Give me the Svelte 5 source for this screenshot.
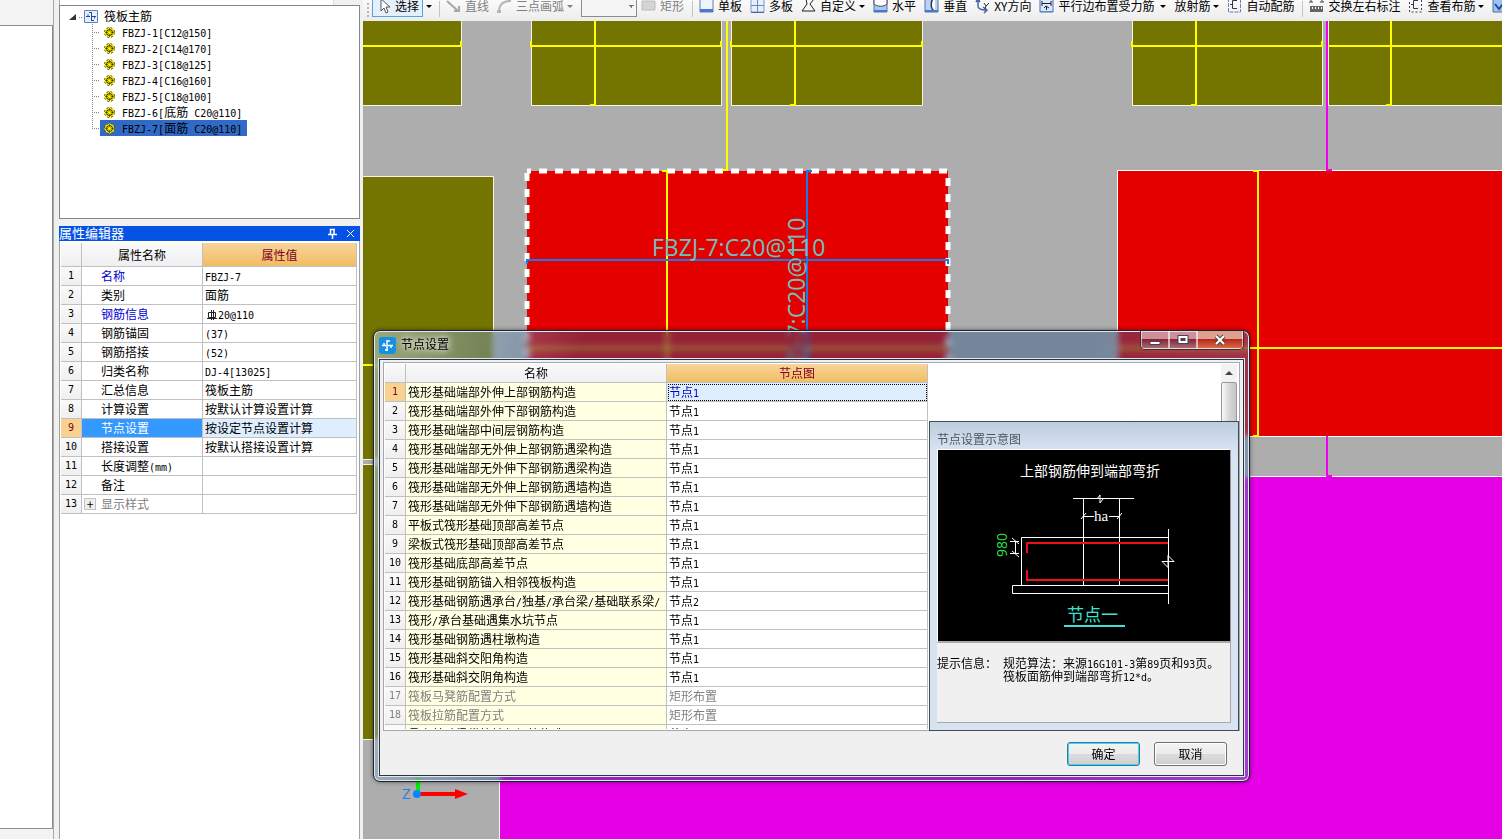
<script>
const tree = [
  'FBZJ-1[C12@150]',
  'FBZJ-2[C14@170]',
  'FBZJ-3[C18@125]',
  'FBZJ-4[C16@160]',
  'FBZJ-5[C18@100]',
  'FBZJ-6[底筋 C20@110]',
  'FBZJ-7[面筋 C20@110]'
]
let picked = $state(6)

const props = [
  { name: '名称', value: 'FBZJ-7', key: true },
  { name: '类别', value: '面筋' },
  { name: '钢筋信息', value: '20@110', key: true, rebar: true },
  { name: '钢筋锚固', value: '(37)' },
  { name: '钢筋搭接', value: '(52)' },
  { name: '归类名称', value: 'DJ-4[13025]' },
  { name: '汇总信息', value: '筏板主筋' },
  { name: '计算设置', value: '按默认计算设置计算' },
  { name: '节点设置', value: '按设定节点设置计算', active: true },
  { name: '搭接设置', value: '按默认搭接设置计算' },
  { name: '长度调整(mm)', value: '' },
  { name: '备注', value: '' },
  { name: '显示样式', value: '', group: true }
]

const nodes = [
  ['筏形基础端部外伸上部钢筋构造', '节点1'],
  ['筏形基础端部外伸下部钢筋构造', '节点1'],
  ['筏形基础端部中间层钢筋构造', '节点1'],
  ['筏形基础端部无外伸上部钢筋遇梁构造', '节点1'],
  ['筏形基础端部无外伸下部钢筋遇梁构造', '节点1'],
  ['筏形基础端部无外伸上部钢筋遇墙构造', '节点1'],
  ['筏形基础端部无外伸下部钢筋遇墙构造', '节点1'],
  ['平板式筏形基础顶部高差节点', '节点1'],
  ['梁板式筏形基础顶部高差节点', '节点1'],
  ['筏形基础底部高差节点', '节点1'],
  ['筏形基础钢筋锚入相邻筏板构造', '节点1'],
  ['筏形基础钢筋遇承台/独基/承台梁/基础联系梁/', '节点2'],
  ['筏形/承台基础遇集水坑节点', '节点1'],
  ['筏形基础钢筋遇柱墩构造', '节点1'],
  ['筏形基础斜交阳角构造', '节点1'],
  ['筏形基础斜交阴角构造', '节点1'],
  ['筏板马凳筋配置方式', '矩形布置'],
  ['筏板拉筋配置方式', '矩形布置'],
  ['悬空基础梁纵筋端部钢筋构造', '节点1']
]

const tools = [
  { icon: 'cursor', text: '选择', on: true, arrow: true },
  { sep: true },
  { icon: 'line', text: '直线', off: true },
  { icon: 'arc', text: '三点画弧', off: true, arrow: true },
  { combo: true },
  { icon: 'rect', text: '矩形', off: true },
  { sep: true },
  { icon: 'single', text: '单板' },
  { icon: 'multi', text: '多板' },
  { icon: 'poly', text: '自定义', arrow: true },
  { icon: 'horiz', text: '水平' },
  { icon: 'vert', text: '垂直' },
  { icon: 'xy', text: 'XY方向' },
  { icon: 'edge', text: '平行边布置受力筋', arrow: true, wide: true },
  { text: '放射筋', arrow: true },
  { icon: 'auto', text: '自动配筋' },
  { sep: true },
  { icon: 'swap', text: '交换左右标注' },
  { icon: 'view', text: '查看布筋', arrow: true },
  { icon: 'check', text: '' }
]
</script>

<!-- ascii runs get the half-width face, everything else the CJK one -->
{#snippet mixed(text)}{#each text.split(/([\x20-\x7e]+)/) as run, i}{#if i % 2}<span class="latin">{run}</span>{:else}{run}{/if}{/each}{/snippet}

{#snippet toolIcon(name)}
  <svg class="ticon" width="15" height="22" viewBox="0 0 15 22" fill="none" aria-hidden="true">
    {#if name === 'cursor'}
      <path d="M4 4v12l3-3 2 5 2-1-2-5h4z" fill="#fff" stroke="#555" />
    {:else if name === 'line'}
      <path d="M1 6l11 10M8 16h5v-5" stroke="#a8a8a8" stroke-width="2" />
    {:else if name === 'arc'}
      <path d="M2 17C2 9 6 6 13 6" stroke="#b8b8b8" stroke-width="2" />
      <path d="M0 15h4v3H0zM11 4h3v3h-3z" fill="#b4b4b4" />
    {:else if name === 'rect'}
      <path d="M1 6h13v9H1z" fill="#d4d4d4" stroke="#bdbdbd" />
    {:else if name === 'single'}
      <path d="M1 3h13v14H1z" fill="#eef5ff" stroke="#667fae" />
      <path d="M1 14h13v3H1z" fill="#4a78cf" />
    {:else if name === 'multi'}
      <path d="M1 3h13v14H1z" fill="#e4efff" stroke="#7f97c4" />
      <path d="M7.500 3v14M1 10.500h13" stroke="#7088b4" />
      <path d="M1 17.500h13" stroke="#4467b0" />
    {:else if name === 'poly'}
      <path d="M5 4h8l-4 5 5 7H1l5-7z" stroke="#222" />
    {:else if name === 'horiz'}
      <path d="M1 4h13v13H1z" fill="#a9c8f3" stroke="#5570a0" />
      <path d="M1 4v5c3 3 10 3 13 0V4" fill="#fff" stroke="#446" />
      <path d="M1 15h13v2H1z" fill="#4778c9" />
    {:else if name === 'vert'}
      <path d="M1 3h13v14H1z" fill="#b9d3f7" stroke="#5570a0" />
      <path d="M11 3C6 4 6 15 11 16" fill="#fff" stroke="#335" stroke-width="1.500" />
      <path d="M1 15h13v2H1z" fill="#4778c9" />
    {:else if name === 'xy'}
      <path d="M3 4v7c0 3 3 4 8 4M3 4L1 7M3 4l2 3M8 12l4 3-3 3" stroke="#4265a8" stroke-width="1.500" />
      <path d="M9 8l2 3 3-3M11 11l-1 3" stroke="#333" />
    {:else if name === 'edge'}
      <path d="M1 3h13v14H1z" fill="#dce9fc" stroke="#4b6ba8" />
      <path d="M3 8.500h9M3 6v5M12 6v5M7.500 15v-4M5 13l2-2 3 2" stroke="#223" />
      <path d="M1 16h13v1H1z" fill="#5b86d6" />
    {:else if name === 'auto'}
      <path d="M1.500 3v14h12V3" stroke="#6d7fc0" stroke-dasharray="4 1" />
      <path d="M10 5.500H5.500v8H10M3 9.500h3" stroke="#335" />
    {:else if name === 'swap'}
      <path d="M2 7V4h4M13 7V4H9M0 7h4M11 7h4" stroke="#444" />
      <path d="M1 11h13v6H1z" fill="#666" />
      <path d="M3 13h10" stroke="#fff" stroke-dasharray="1 2" stroke-width="2" />
    {:else if name === 'view'}
      <path d="M1.500 3v14h12V3" stroke="#444" stroke-dasharray="2 2" />
      <path d="M10 5.500H5.500v8H10M3 9.500h3" stroke="#335" />
    {:else if name === 'check'}
      <path d="M1 3h13v14H1z" fill="#9fc2f2" stroke="#5570a0" />
      <path d="M3 9l4 5 7-9" stroke="#234a8c" stroke-width="2" />
    {/if}
  </svg>
{/snippet}

<div class="app">
  <aside class="strip"><div class="strip-body"></div></aside>

  <aside class="side">
    <div class="stub"></div>
    <section class="tree">
      <div class="root">
        <svg width="44" height="16" viewBox="0 0 44 16" aria-hidden="true">
          <path d="M16 6v6H9z" fill="#333" />
          <path d="M19 9.500h4" stroke="#888" stroke-dasharray="1 1" />
          <path d="M24.500 2.500h13v12h-13z" fill="#e4effc" stroke="#5f7fc4" />
          <path d="M31.500 4v9M26 8.500h4M32 8.500h4M28 6.500v2M34.500 8.500v2M29 4.500h3M31 12.500h3" stroke="#27499a" fill="none" />
        </svg>
        筏板主筋
      </div>
      <ul>
        {#each tree as label, i}
          <li class:last={i === tree.length - 1}>
            <button class:picked={picked === i} onclick={() => picked = i}>
              <svg width="13" height="13" viewBox="0 0 13 13" aria-hidden="true">
                <circle cx="6.500" cy="6.500" r="5" fill="#fff200" stroke="#4a4a10" stroke-dasharray="2 2" />
                <path d="M6.500 2v9M2 6.500h9M4 4l5 5M9 4l-5 5" stroke="#4a4a00" stroke-width="0.700" />
                <circle cx="6.500" cy="6.500" r="3" fill="none" stroke="#333300" />
                <circle cx="6.500" cy="6.500" r="1.500" fill="#fff200" />
              </svg>
              <span>{@render mixed(label)}</span>
            </button>
          </li>
        {/each}
      </ul>
    </section>

    <section class="editor">
      <header>
        <h2>属性编辑器</h2>
        <button aria-label="固定">
          <svg width="9" height="11" viewBox="0 0 9 11"><path d="M2.500 1v5M2 1.500h5M6 1v5M0 6.500h9M4.500 7v4" stroke="#fff" fill="none" stroke-width="1.500" /></svg>
        </button>
        <button aria-label="关闭">
          <svg width="9" height="9" viewBox="0 0 9 9"><path d="M1 1l7 7M8 1L1 8" stroke="#fff" /></svg>
        </button>
      </header>
      <div class="editor-body">
        <table class="grid props">
          <colgroup><col class="c-num"><col class="c-name"><col></colgroup>
          <thead>
            <tr><th></th><th>属性名称</th><th class="hot">属性值</th></tr>
          </thead>
          <tbody>
            {#each props as row, i}
              <tr class:active={row.active}>
                <th class="num">{i + 1}</th>
                <td class="name" class:key={row.key} class:dim={row.group}>
                  {#if row.group}<button class="plus" aria-label="展开">+</button>{/if}{@render mixed(row.name)}
                </td>
                <td>
                  {#if row.rebar}<svg class="rebar" width="10" height="10" viewBox="0 0 10 10" aria-hidden="true"><path d="M1.500 2.500h7v5h-7zM4.500 0v10M6.500 0v10M0 8.500h10" stroke="#222" fill="none" /></svg>{/if}{@render mixed(row.value)}
                </td>
              </tr>
            {/each}
          </tbody>
        </table>
      </div>
    </section>
  </aside>

  <main>
    <nav class="toolbar">
      <i class="grip"></i>
      {#each tools as t}
        {#if t.sep}
          <i class="sep"></i>
        {:else if t.combo}
          <select aria-label="画弧方式"><option></option></select>
        {:else}
          <button class="tool" class:on={t.on} class:wide={t.wide} disabled={t.off} aria-label={t.text || '校核'}>
            <span class="face">
              {#if t.icon}{@render toolIcon(t.icon)}{/if}
              {#if t.text}<span>{t.text}</span>{/if}
            </span>
            {#if t.arrow}<i class="drop"></i>{/if}
          </button>
        {/if}
      {/each}
    </nav>

    <div class="canvas">
      <svg class="plan" viewBox="363 21 1139 818" preserveAspectRatio="xMinYMin slice" fill="none">
        <g fill="#747400" stroke="#f4f4e8">
          <path d="M362.500 20v85.500h99V20zM531.500 20v85.500h190V20zM731.500 20v85.500h191V20zM1132.500 20v85.500h190V20zM1328.500 20v85.500h180V20z" />
          <path d="M362.500 176.500h131v283h-131zM362.500 464.500h131v275h-131z" />
        </g>
        <path d="M499.500 840V476.500H1510V840z" fill="#e600e6" stroke="#fff" />
        <path d="M1117.500 170.500H1510v266h-392.500z" fill="#e50000" stroke="#fff" />
        <path d="M527 171h421v270H527z" fill="#e50000" />
        <path d="M527 171h421v270H527z" stroke="#fff" stroke-width="5" stroke-dasharray="8 8" stroke-dashoffset="4" />
        <g stroke="#ffff00" stroke-width="2">
          <path d="M363 46h98v-5M531 41v5h190v-5M731 41v5h191v-5M1132 41v5h190v-5M1328 46h180" />
          <path d="M595 20v85h-5M795 20v85h-5M1196 20v85h-5M1391 20v85h-5M727 20v150h-5M363 365h130" />
          <path d="M662 171h5v270M527 348h421M1253 171h5v265h-5M1118 348h384" />
        </g>
        <path d="M527 264v-4h421v4M812 171h-5v270" stroke="#1f78e8" stroke-width="2" />
        <path d="M1327 20v150h5M1327 436v40h5" stroke="#f000f0" stroke-width="2" />
        <g fill="#6cc0bd" font-size="23" class="tag">
          <text x="652" y="256">FBZJ-7:C20@110</text>
          <text transform="translate(805 391) rotate(-90)">FBZJ-7:C20@110</text>
        </g>
        <path d="M418 775v18" stroke="#00f000" stroke-width="4" />
        <path d="M420 794h38" stroke="#f00" stroke-width="4" />
        <path d="M455 789l13 5-13 5z" fill="#f00" />
        <circle cx="417" cy="794" r="4" fill="#0a84ff" />
        <text x="402" y="799" font-size="15" fill="#2a7fe0" class="tag">Z</text>
      </svg>

      <div class="dialog" role="dialog" aria-labelledby="dlg-title">
        <header class="caption">
          <svg width="17" height="17" viewBox="0 0 17 17" aria-hidden="true">
            <rect width="17" height="17" rx="3" fill="#1590e8" />
            <path d="M8 3v11M3 8.500h4M9 8.500h5M5 6v3M12 8v3M8 4h3M6 13h3" stroke="#fff" stroke-width="1.500" fill="none" />
          </svg>
          <h1 id="dlg-title">节点设置</h1>
          <div class="winbtns">
            <button aria-label="最小化"><svg width="12" height="12" viewBox="0 0 12 12"><path d="M1 7.500h10v3H1z" fill="#fff" stroke="#445" /></svg></button>
            <button aria-label="最大化"><svg width="12" height="12" viewBox="0 0 12 12"><path d="M2.500 3h7v5h-7z" fill="none" stroke="#445" stroke-width="4" /><path d="M2.500 3h7v5h-7z" fill="none" stroke="#fff" stroke-width="2" /></svg></button>
            <button aria-label="关闭" class="x"><svg width="12" height="12" viewBox="0 0 12 12"><path d="M2 2l8 8M10 2l-8 8" stroke="#544" stroke-width="4" /><path d="M2 2l8 8M10 2l-8 8" stroke="#fff" stroke-width="2" /></svg></button>
          </div>
        </header>

        <div class="client">
          <div class="list">
            <div class="rows">
              <table class="grid nodes">
                <colgroup><col class="c-num"><col class="c-half"><col class="c-half"></colgroup>
                <thead>
                  <tr><th></th><th>名称</th><th class="hot">节点图</th></tr>
                </thead>
                <tbody>
                  {#each nodes as [name, pic], i}
                    <tr class:first={i === 0} class:dim={i === 16 || i === 17}>
                      <th class="num">{i < 18 ? i + 1 : ''}</th>
                      <td class="cream">{@render mixed(name)}</td>
                      <td>{@render mixed(pic)}</td>
                    </tr>
                  {/each}
                </tbody>
              </table>
            </div>
            <div class="scroll"><i></i><b></b></div>

            <section class="preview">
              <h3>节点设置示意图</h3>
              <svg class="sketch" viewBox="0 0 292 191" fill="none" stroke="#fff">
                <rect width="292" height="191" fill="#000" stroke="none" />
                <g stroke="none" fill="#fff">
                  <text x="152" y="26" font-size="14" text-anchor="middle">上部钢筋伸到端部弯折</text>
                  <text x="156" y="71" font-size="15" class="serif">ha</text>
                </g>
                <path d="M135 48.500h61M145.500 48v87M181.500 48v87M159 49l3-4v8l3-4" />
                <path d="M143 69l5-6M145 66.500h11M171 66.500h11M179 69l5-6" />
                <path d="M230 87.500H83.500v48M230 135.500H74.500v8H230M230.500 79v75" />
                <path d="M224 111.500h12l-6-6v12z" />
                <path d="M77.500 91v13M72 91.500h9M72 103.500h9M74 88l7 6M74 101l7 6" />
                <path d="M230 93H89v10M230 130H89v-10" stroke="#f01010" stroke-width="2" />
                <text transform="translate(69 107) rotate(-90)" font-size="14" fill="#2fe04a" stroke="none" class="tag">980</text>
                <text x="129" y="171" font-size="17" fill="#40e0d0" stroke="none">节点一</text>
                <path d="M126 176h61" stroke="#40e0d0" stroke-width="2" />
              </svg>
              <dl>
                <dt>提示信息：</dt>
                <dd>规范算法：来源{@render mixed('16G101-3')}第{@render mixed('89')}页和{@render mixed('93')}页。<br>筏板面筋伸到端部弯折{@render mixed('12*d')}。</dd>
              </dl>
            </section>
          </div>

          <footer>
            <button class="ok">确定</button>
            <button>取消</button>
          </footer>
        </div>
      </div>
    </div>
  </main>
</div>

<style>
  :global(body){
    margin: 0;
    background: #f0f0f0;
  }

  .app{
    display: flex;
    height: 100vh;
    overflow: hidden;
    background: #f0f0f0;
    color: #000;
    font: 12px/16px "Noto Sans CJK SC", sans-serif;
  }
  button, select{
    font: inherit;
    color: inherit;
    padding: 0;
    margin: 0;
    border: 0;
    background: none;
  }
  h1, h2, h3, ul, dl, dd{
    margin: 0;
    padding: 0;
    font-size: 12px;
    font-weight: normal;
  }
  svg{
    flex: none;
  }
  .latin, .grid .num{
    font-family: "DejaVu Sans Mono", monospace;
    font-size: 10px;
    line-height: 10px;
    white-space: pre;
  }

  /* left strip */
  .strip{
    display: flex;
    flex: none;
    box-sizing: border-box;
    width: 54px;
    padding: 25px 0 10px;
    border-right: 1px solid #a8a8a8;
    background: #f3f3f3;
  }
  .strip-body{
    flex: 1;
    border: solid #8c8c8c;
    border-width: 1px 1px 1px 0;
    background: #fff;
  }

  /* side panel */
  .side{
    display: flex;
    flex-direction: column;
    flex: none;
    width: 301px;
    margin: 0 3px 0 5px;
  }
  .stub{
    height: 5px;
    margin-right: 26px;
    border-left: 1px solid #aaa;
    border-right: 1px solid #ddd;
    background: #fff;
  }
  .tree{
    box-sizing: border-box;
    height: 214px;
    margin-bottom: 7px;
    padding-top: 2px;
    border: 1px solid #828790;
    background: #fff;
  }
  .root{
    display: flex;
    height: 16px;
  }
  .tree ul{
    list-style: none;
    margin-left: 32px;
  }
  .tree li{
    display: flex;
    height: 16px;
    background:
      repeating-linear-gradient(90deg, #888 0 1px, transparent 1px 2px) 0 8px / 8px 1px no-repeat,
      repeating-linear-gradient(#888 0 1px, transparent 1px 2px) 0 0 / 1px 16px no-repeat;
  }
  .tree li.last{
    background-size: 8px 1px, 1px 8px;
  }
  .tree li button{
    display: flex;
    align-items: center;
    gap: 6px;
    margin-left: 8px;
    padding: 0 5px 0 3px;
    line-height: 16px;
  }
  .tree li .picked{
    background: #316ac5;
  }

  .editor{
    display: flex;
    flex-direction: column;
    flex: 1;
    min-height: 0;
  }
  .editor header{
    display: flex;
    align-items: center;
    gap: 9px;
    height: 15px;
    padding-right: 5px;
    background: #0453e4;
    color: #fff;
  }
  .editor h2{
    flex: 1;
    font-size: 13px;
    line-height: 14px;
    height: 15px;
  }
  .editor header button{
    display: flex;
  }
  .editor-body{
    flex: 1;
    padding: 2px 2px 0 1px;
    border: solid #a0a0a0;
    border-width: 0 1px;
    background: #fff;
  }

  /* grids */
  .grid{
    table-layout: fixed;
    border-spacing: 0;
    width: 100%;
  }
  .grid th, .grid td{
    box-sizing: border-box;
    height: 19px;
    padding: 0 0 0 2px;
    border: solid #c0c0c0;
    border-width: 0 1px 1px 0;
    line-height: 16px;
    text-align: left;
    font-weight: normal;
    white-space: nowrap;
    overflow: hidden;
  }
  .grid th{
    padding: 0;
    text-align: center;
    background: linear-gradient(#fafafa, #efeff1);
  }
  .grid .hot{
    color: #800020;
    background: linear-gradient(#f8d49a, #f0bd62);
  }
  .c-num{
    width: 21px;
  }
  .c-name{
    width: 121px;
  }
  .c-half{
    width: 261px;
  }
  .props thead th{
    height: 24px;
  }
  .props .name{
    position: relative;
    padding-left: 19px;
  }
  .props .key{
    color: #0000d8;
  }
  .grid .dim, .grid .dim td{
    color: #808080;
  }
  .plus{
    position: absolute;
    left: 2px;
    top: 3px;
    width: 12px;
    height: 12px;
    border: 1px solid #c4c4c4;
    background: #eee;
    color: #000;
    line-height: 10px;
  }
  .rebar{
    margin: 0 1px -1px 2px;
  }
  .active td{
    background: #dfeeff;
  }
  .active .name{
    background: #3399ff;
    color: #fff;
  }
  .grid .active .num, .grid .first .num{
    background: #fbd18f;
    color: #800020;
  }
  .rows{
    flex: none;
    overflow: hidden;
  }
  .nodes{
    width: 543px;
  }
  .cream{
    background: #ffffe1;
  }
  .first td:last-child{
    outline: 1px dotted #000;
    outline-offset: -2px;
    background: #dfeeff;
    color: #0000c8;
  }

  /* toolbar */
  main{
    display: flex;
    flex-direction: column;
    flex: 1;
    min-width: 0;
  }
  .toolbar{
    display: flex;
    align-items: flex-end;
    box-sizing: border-box;
    height: 21px;
    padding: 0 0 4px 4px;
    overflow: hidden;
    background: linear-gradient(#fafafa, #ececec);
    line-height: 12px;
  }
  .grip{
    flex: none;
    width: 2px;
    height: 14px;
    margin-right: 3px;
    background: repeating-linear-gradient(#b8b8b8 0 2px, transparent 2px 4px);
  }
  .sep{
    flex: none;
    width: 1px;
    height: 16px;
    margin-right: 6px;
    background: #c4c4c4;
  }
  .tool{
    display: flex;
    flex: none;
    align-items: center;
    height: 22px;
    margin-right: 8px;
    white-space: nowrap;
  }
  .tool:disabled{
    color: #808080;
  }
  .face{
    display: flex;
    align-items: center;
    gap: 4px;
  }
  .tool.on{
    margin-right: 7px;
  }
  .on .face{
    box-sizing: border-box;
    height: 22px;
    gap: 3px;
    padding: 0 3px 0 4px;
    border: 1px solid #5aa0dc;
    background: #e4f1fc;
  }
  .drop{
    margin-left: 3px;
    border: solid transparent;
    border-width: 3px 3px 0;
    border-top-color: currentColor;
  }
  .wide .drop{
    margin-left: 6px;
  }
  .toolbar select{
    flex: none;
    box-sizing: border-box;
    width: 56px;
    height: 24px;
    margin-right: 4px;
    border: 1px solid #8c8c8c;
    appearance: none;
    background: linear-gradient(45deg, transparent 50%, #777 50%) 46px 11px / 3px 3px no-repeat,
      linear-gradient(-45deg, transparent 50%, #777 50%) 49px 11px / 3px 3px no-repeat, #f5f5f5;
  }

  /* drawing area */
  .canvas{
    position: relative;
    flex: 1;
    min-height: 0;
    overflow: hidden;
    background: #adadad;
  }
  .plan{
    display: block;
    width: 100%;
    height: 100%;
  }
  .tag{
    font-family: "Open Sans", sans-serif;
  }
  .serif{
    font-family: "Liberation Serif", serif;
  }

  /* node dialog, a free floating window */
  .dialog{
    position: absolute;
    left: 10px;
    top: 309px;
    box-sizing: border-box;
    width: 877px;
    padding: 0 5px 5px;
    border: 1px solid #1c2430;
    border-radius: 7px;
    box-shadow: inset 0 0 0 1px #dfe8f2, 0 0 4px rgba(0, 0, 0, .5);
    background: linear-gradient(100deg, rgba(190, 210, 225, .55), rgba(40, 80, 130, .42) 22%, rgba(40, 80, 130, .42) 75%, rgba(90, 130, 180, .45));
    backdrop-filter: blur(3px);
  }
  .caption{
    display: flex;
    align-items: center;
    gap: 5px;
    height: 28px;
  }
  .caption h1{
    flex: 1;
    line-height: 16px;
    padding-bottom: 2px;
    text-shadow: 0 0 6px #fff, 0 0 10px #fff;
  }
  .winbtns{
    display: flex;
    align-self: flex-start;
    border: solid #3a2a36;
    border-width: 0 1px 1px;
    border-radius: 0 0 5px 5px;
    overflow: hidden;
  }
  .winbtns button{
    display: flex;
    align-items: center;
    justify-content: center;
    width: 28px;
    height: 18px;
    border: 1px solid rgba(255, 255, 255, .6);
    border-top: 0;
    box-sizing: border-box;
    background: linear-gradient(rgba(240, 210, 215, .6) 45%, rgba(100, 30, 50, .4) 50%, rgba(180, 120, 140, .6));
  }
  .winbtns .x{
    width: 46px;
    background: linear-gradient(#e0a090 45%, #b82a18 50%, #d86848);
  }
  .client{
    padding: 2px 3px 0;
    border: 1px solid #2a3444;
    box-shadow: 0 0 0 1px #dfe8f2;
    background: #f0f0f0;
  }
  .list{
    position: relative;
    display: flex;
    justify-content: space-between;
    box-sizing: border-box;
    height: 369px;
    padding: 1px 2px 1px 1px;
    border: 1px solid #a4a8ae;
    background: #fff;
  }
  .scroll{
    width: 16px;
    overflow: hidden;
    background: #f2f2f2;
  }
  .scroll i{
    display: block;
    margin: 7px 4px;
    border: solid transparent;
    border-width: 0 4px 4px;
    border-bottom-color: #444;
  }
  .scroll b{
    display: block;
    box-sizing: border-box;
    height: 100px;
    border: 1px solid #999;
    border-radius: 2px;
    background: linear-gradient(90deg, #f8f8f8, #d8d8d8 50%, #c4c4c4);
  }
  .preview{
    position: absolute;
    right: 0;
    bottom: -1px;
    box-sizing: border-box;
    width: 310px;
    height: 310px;
    padding: 0 7px 7px;
    border: 1px solid #414c58;
    background: linear-gradient(#bccddd, #d7e3f1 28px);
  }
  .preview h3{
    height: 27px;
    line-height: 33px;
    color: #4c5660;
  }
  .sketch{
    display: block;
    width: 292px;
    border: 1px solid #fff;
    border-right-color: #999;
    border-bottom: 2px solid #aaa;
  }
  .preview dl{
    display: flex;
    box-sizing: border-box;
    height: 80px;
    padding-top: 14px;
    border: solid #a8a8a8;
    border-width: 0 1px 1px 0;
    background: #f0f0f0;
    line-height: 12px;
    white-space: nowrap;
  }
  .preview dt{
    width: 66px;
  }
  .client footer{
    display: flex;
    justify-content: flex-end;
    gap: 14px;
    padding: 11px 13px 9px;
  }
  .client footer button{
    box-sizing: border-box;
    width: 73px;
    height: 24px;
    border: 1px solid #707070;
    border-radius: 3px;
    box-shadow: inset 0 0 0 1px #fff;
    background: linear-gradient(#f3f3f3, #ebebeb 48%, #dcdcdc 52%, #cfcfcf);
  }
  .client footer .ok{
    border-color: #2c7c9c;
    box-shadow: inset 0 0 0 1px #48d0f4;
  }
</style>
